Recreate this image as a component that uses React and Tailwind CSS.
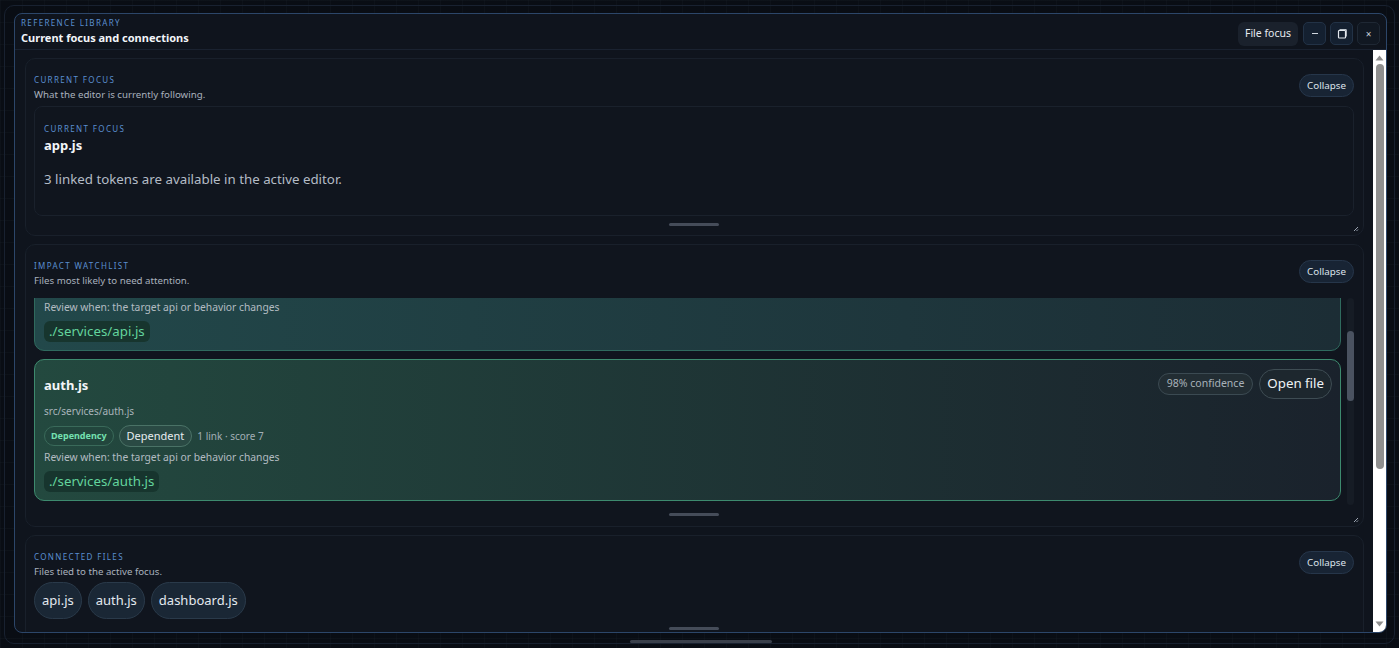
import React from "react";

const font = { fontFamily: '"Noto Sans", "Open Sans", sans-serif' };

function SectionHeader({ label, sub }) {
  return (
    <div className="flex items-start justify-between">
      <div className="flex flex-col">
        <div className="text-[8px] leading-[10px] tracking-[0.17em] text-[#5b8fd0] uppercase">{label}</div>
        <div className="text-[9.7px] leading-[14px] text-[#a9b1bd] mt-[3px]">{sub}</div>
      </div>
      <button className="mt-[-1px] h-[23px] px-[7px] rounded-full bg-[#182434] border border-[#26364a] text-[9.8px] text-[#dbe2ea] leading-none">
        Collapse
      </button>
    </div>
  );
}

function Handle() {
  return (
    <div className="flex justify-center">
      <div className="h-[3px] w-[50px] rounded-full bg-[#454c59]" />
    </div>
  );
}

function Corner() {
  return (
    <svg className="absolute right-[4px] bottom-[3px]" width="6" height="6" viewBox="0 0 6 6">
      <path d="M5 1 L1 5 M5 3.5 L3.5 5" stroke="#9aa3b0" strokeWidth="1" />
    </svg>
  );
}

function FileCard({ name, path, chip, border, grad }) {
  return (
    <div className={`shrink-0 rounded-[10px] border ${border} ${grad} pl-[9px] pr-[8px] pt-[9px] pb-[8px]`}>
      <div className="flex items-start justify-between h-[30px]">
        <div className="text-[13px] font-bold text-[#f3f6f9] leading-[18px] mt-[7px]">{name}</div>
        <div className="flex items-center gap-[6px]">
          <span className="h-[22px] px-[8px] flex items-center rounded-full border border-[#3b4a52] bg-[#222d33] text-[10.5px] text-[#a8b2ba]">
            98% confidence
          </span>
          <button className="h-[30px] px-[7px] rounded-full border border-[#3e4c53] bg-[#1d272e] text-[13.3px] text-[#eef2f5]">
            Open file
          </button>
        </div>
      </div>
      <div className="text-[10px] text-[#a9b4ba] leading-[14px] mt-[5px]">{path}</div>
      <div className="flex items-center gap-[5px] mt-[7px] h-[22px]">
        <span className="h-[20px] px-[6px] flex items-center rounded-full border border-[#3a6a5a] bg-[#22463d] text-[9px] font-bold text-[#74e0b0]">
          Dependency
        </span>
        <span className="h-[22px] px-[7px] flex items-center rounded-full border border-[#4a7266] bg-[#2a4a44] text-[11px] text-[#e6ecef]">
          Dependent
        </span>
        <span className="text-[10px] text-[#a3afb6]">1 link · score 7</span>
      </div>
      <div className="text-[10.3px] text-[#b3bcc2] leading-[15px] mt-[3px]">Review when: the target api or behavior changes</div>
      <div className="mt-[6px] flex">
        <span className="h-[21px] px-[5px] flex items-center rounded-[6px] bg-[#17352e] text-[13.3px] text-[#63d49d]">{chip}</span>
      </div>
    </div>
  );
}

export default function App() {
  return (
    <div
      style={font}
      className="w-[1399px] h-[648px] overflow-hidden bg-[#090d14] bg-[linear-gradient(rgba(120,150,190,0.035)_1px,transparent_1px),linear-gradient(90deg,rgba(120,150,190,0.035)_1px,transparent_1px)] bg-[size:22px_22px] p-[4px] pt-[5px]"
    >
      <div className="h-full rounded-[10px] border border-[#182130] flex flex-col pt-[7px] pl-[9px] pr-[7px]">
        <div className="h-[620px] shrink-0 rounded-[8px] border border-[#2c4669] bg-[#0f141d] flex flex-col overflow-hidden">
          {/* header */}
          <div className="h-[36px] shrink-0 border-b border-[#1a2230] flex items-start justify-between pl-[6px] pr-[6px] pt-[4px]">
            <div className="flex flex-col">
              <div className="text-[8px] leading-[10px] tracking-[0.17em] text-[#5b8fd0]">REFERENCE LIBRARY</div>
              <div className="text-[11px] leading-[16px] font-bold text-[#f2f5f9] mt-[2px]">Current focus and connections</div>
            </div>
            <div className="flex items-center gap-[4px] self-center">
              <button className="h-[24px] px-[7px] rounded-[6px] bg-[#1a212c] text-[10.5px] text-[#e6ebf1] mr-[1px]">File focus</button>
              <button className="w-[23px] h-[23px] rounded-[5px] bg-[#142030] border border-[#223246] flex items-center justify-center">
                <div className="w-[6px] h-[1px] bg-[#cfd6df]" />
              </button>
              <button className="w-[23px] h-[23px] rounded-[5px] bg-[#142030] border border-[#223246] flex items-center justify-center">
                <svg width="10" height="10" viewBox="0 0 10 10">
                  <rect x="1.5" y="1.5" width="7" height="7.5" rx="0.8" fill="none" stroke="#e3e8ee" strokeWidth="1.2" />
                  <path d="M2.5 0.6 H9.3 V7.5" fill="none" stroke="#e3e8ee" strokeWidth="0.9" />
                </svg>
              </button>
              <button className="w-[23px] h-[23px] rounded-[5px] bg-[#111822] border border-[#1f2834] flex items-center justify-center text-[10px] text-[#c9d0d8] leading-none">
                ×
              </button>
            </div>
          </div>

          {/* body */}
          <div className="flex-1 min-h-0 flex">
            <div className="flex-1 min-w-0 overflow-hidden pl-[10px] pr-[9px] pt-[8px] flex flex-col gap-[8px]">
              {/* section 1 */}
              <div className="relative shrink-0 rounded-[10px] border border-[#19202b] bg-[#10151e] pl-[8px] pr-[9px] pt-[16px] pb-[9px]">
                <SectionHeader label="Current focus" sub="What the editor is currently following." />
                <div className="mt-[4px] h-[110px] rounded-[8px] border border-[#1a212c] bg-[#10151e] pl-[9px] pt-[17px]">
                  <div className="text-[8px] leading-[10px] tracking-[0.17em] text-[#5b8fd0]">CURRENT FOCUS</div>
                  <div className="text-[13px] leading-[20px] font-bold text-[#f3f6f9] mt-[1px]">app.js</div>
                  <div className="text-[13.3px] leading-[20px] text-[#b4bcc6] mt-[14px]">3 linked tokens are available in the active editor.</div>
                </div>
                <div className="mt-[7px]">
                  <Handle />
                </div>
                <Corner />
              </div>

              {/* section 2 */}
              <div className="relative shrink-0 rounded-[10px] border border-[#19202b] bg-[#10151e] pl-[8px] pr-[9px] pt-[16px] pb-[10px]">
                <SectionHeader label="Impact watchlist" sub="Files most likely to need attention." />
                <div className="mt-[10px] h-[207px] overflow-hidden flex gap-[6px]">
                  <div className="flex-1 min-w-0 flex flex-col gap-[8px] mt-[-89px]">
                    <FileCard
                      name="api.js"
                      path="src/services/api.js"
                      chip="./services/api.js"
                      border="border-[#2f6a5e]"
                      grad="bg-[linear-gradient(90deg,#22484a,#1c2d35)]"
                    />
                    <FileCard
                      name="auth.js"
                      path="src/services/auth.js"
                      chip="./services/auth.js"
                      border="border-[#3d8a6e]"
                      grad="bg-[linear-gradient(90deg,#23493f,#1a222c)]"
                    />
                  </div>
                  <div className="w-[7px] shrink-0 rounded-full bg-[#161c25] flex flex-col">
                    <div className="h-[33px] shrink-0" />
                    <div className="h-[70px] shrink-0 rounded-full bg-[#4a5260]" />
                  </div>
                </div>
                <div className="mt-[8px]">
                  <Handle />
                </div>
                <Corner />
              </div>

              {/* section 3 */}
              <div className="relative shrink-0 rounded-[10px] border border-[#19202b] bg-[#10151e] pl-[8px] pr-[9px] pt-[16px] pb-[10px]">
                <SectionHeader label="Connected files" sub="Files tied to the active focus." />
                <div className="mt-[3px] flex gap-[6px]">
                  {["api.js", "auth.js", "dashboard.js"].map((f) => (
                    <span
                      key={f}
                      className="h-[37px] px-[7px] flex items-center rounded-full border border-[#2a3a4a] bg-[#1a2735] text-[13px] text-[#e3e9ef]"
                    >
                      {f}
                    </span>
                  ))}
                </div>
                <div className="mt-[8px]">
                  <Handle />
                </div>
              </div>
            </div>

            {/* native-like scrollbar */}
            <div className="w-[13px] shrink-0 bg-white flex flex-col items-center">
              <svg className="mt-[5px]" width="9" height="6" viewBox="0 0 9 6">
                <path d="M0.5 5.5 L4.5 0.5 L8.5 5.5 Z" fill="#8e8e8e" />
              </svg>
              <div className="mt-[3px] w-[8px] h-[405px] rounded-full bg-[#8f8f8f]" />
              <div className="flex-1" />
              <svg className="mb-[5px]" width="9" height="6" viewBox="0 0 9 6">
                <path d="M0.5 0.5 L4.5 5.5 L8.5 0.5 Z" fill="#8e8e8e" />
              </svg>
            </div>
          </div>
        </div>
        <div className="flex-1 flex justify-center items-end">
          <div className="h-[3px] w-[142px] rounded-full bg-[#3a404b]" />
        </div>
      </div>
    </div>
  );
}
